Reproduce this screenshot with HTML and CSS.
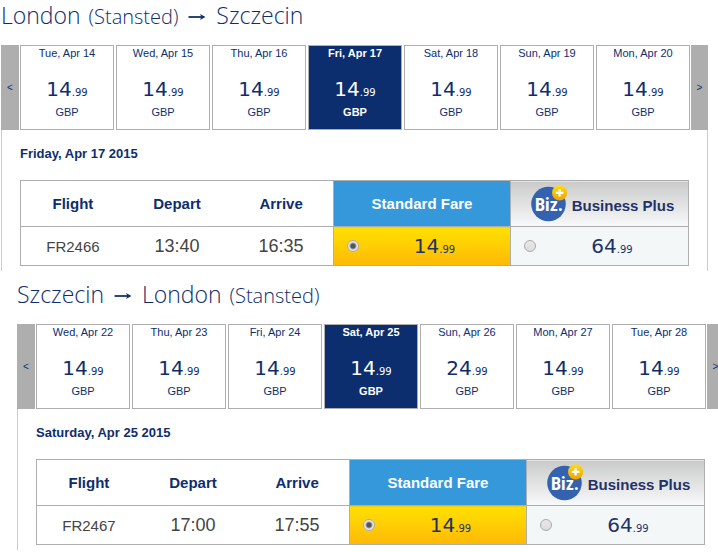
FILE: index.html
```html
<!DOCTYPE html>
<html lang="en">
<head>
    <meta charset="UTF-8">
    <meta name="viewport" content="width=device-width, initial-scale=1.0">
    <title>Select flights</title>
    <link rel="stylesheet" href="styles.css">
</head>
<body>
    <!-- shared icons -->
    <svg class="icon-defs" width="0" height="0" aria-hidden="true">
        <defs>
            <linearGradient id="gold" x1="0" y1="0" x2="0" y2="1">
                <stop offset="0" stop-color="#ffdc17"/>
                <stop offset="1" stop-color="#eda400"/>
            </linearGradient>
            <symbol id="arrow" viewBox="0 0 18 8">
                <path d="M0.5 4H16" stroke="#15316b" stroke-width="1.8" fill="none"/>
                <path d="M12 1L17.5 4L12 7L13.4 4Z" fill="#15316b"/>
            </symbol>
            <symbol id="biz" viewBox="0 0 37 37">
                <circle cx="17.5" cy="19" r="17.3" fill="#3562b0"/>
                <text x="4" y="26" class="biz-text">Biz.</text>
                <circle cx="28.6" cy="7.8" r="7.6" fill="url(#gold)"/>
                <path d="M28.6 4V11.6M24.8 7.8H32.4" stroke="#fff" stroke-width="2.2"/>
            </symbol>
        </defs>
    </svg>

    <section class="trip outbound">
        <h2>London <small>(Stansted)</small> <svg class="arrow" role="img" aria-label="to"><use href="#arrow"/></svg> Szczecin</h2>
        <div class="carousel">
            <button class="nav prev" type="button" aria-label="Earlier">&lt;</button>
            <div class="days">
                <button class="day" type="button"><span>Tue, Apr 14</span><span class="price">14<small>.99</small></span><span>GBP</span></button>
                <button class="day" type="button"><span>Wed, Apr 15</span><span class="price">14<small>.99</small></span><span>GBP</span></button>
                <button class="day" type="button"><span>Thu, Apr 16</span><span class="price">14<small>.99</small></span><span>GBP</span></button>
                <button class="day selected" type="button"><span>Fri, Apr 17</span><span class="price">14<small>.99</small></span><span>GBP</span></button>
                <button class="day" type="button"><span>Sat, Apr 18</span><span class="price">14<small>.99</small></span><span>GBP</span></button>
                <button class="day" type="button"><span>Sun, Apr 19</span><span class="price">14<small>.99</small></span><span>GBP</span></button>
                <button class="day" type="button"><span>Mon, Apr 20</span><span class="price">14<small>.99</small></span><span>GBP</span></button>
            </div>
            <button class="nav next" type="button" aria-label="Later">&gt;</button>
        </div>
        <div class="flights">
            <h3>Friday, Apr 17 2015</h3>
            <table>
                <colgroup><col><col><col><col class="col-standard"><col class="col-business"></colgroup>
                <thead>
                    <tr>
                        <th>Flight</th>
                        <th>Depart</th>
                        <th>Arrive</th>
                        <th class="standard">Standard Fare</th>
                        <th class="business"><div class="biz-head"><svg class="biz" aria-hidden="true"><use href="#biz"/></svg><span>Business Plus</span></div></th>
                    </tr>
                </thead>
                <tbody>
                    <tr>
                        <td class="number">FR2466</td>
                        <td>13:40</td>
                        <td>16:35</td>
                        <td class="standard"><label class="fare"><input type="radio" name="out" checked><span class="price">14<small>.99</small></span></label></td>
                        <td class="business"><label class="fare"><input type="radio" name="out"><span class="price">64<small>.99</small></span></label></td>
                    </tr>
                </tbody>
            </table>
        </div>
    </section>

    <section class="trip inbound">
        <h2>Szczecin <svg class="arrow" role="img" aria-label="to"><use href="#arrow"/></svg> London <small>(Stansted)</small></h2>
        <div class="carousel">
            <button class="nav prev" type="button" aria-label="Earlier">&lt;</button>
            <div class="days">
                <button class="day" type="button"><span>Wed, Apr 22</span><span class="price">14<small>.99</small></span><span>GBP</span></button>
                <button class="day" type="button"><span>Thu, Apr 23</span><span class="price">14<small>.99</small></span><span>GBP</span></button>
                <button class="day" type="button"><span>Fri, Apr 24</span><span class="price">14<small>.99</small></span><span>GBP</span></button>
                <button class="day selected" type="button"><span>Sat, Apr 25</span><span class="price">14<small>.99</small></span><span>GBP</span></button>
                <button class="day" type="button"><span>Sun, Apr 26</span><span class="price">24<small>.99</small></span><span>GBP</span></button>
                <button class="day" type="button"><span>Mon, Apr 27</span><span class="price">14<small>.99</small></span><span>GBP</span></button>
                <button class="day" type="button"><span>Tue, Apr 28</span><span class="price">14<small>.99</small></span><span>GBP</span></button>
            </div>
            <button class="nav next" type="button" aria-label="Later">&gt;</button>
        </div>
        <div class="flights">
            <h3>Saturday, Apr 25 2015</h3>
            <table>
                <colgroup><col><col><col><col class="col-standard"><col class="col-business"></colgroup>
                <thead>
                    <tr>
                        <th>Flight</th>
                        <th>Depart</th>
                        <th>Arrive</th>
                        <th class="standard">Standard Fare</th>
                        <th class="business"><div class="biz-head"><svg class="biz" aria-hidden="true"><use href="#biz"/></svg><span>Business Plus</span></div></th>
                    </tr>
                </thead>
                <tbody>
                    <tr>
                        <td class="number">FR2467</td>
                        <td>17:00</td>
                        <td>17:55</td>
                        <td class="standard"><label class="fare"><input type="radio" name="in" checked><span class="price">14<small>.99</small></span></label></td>
                        <td class="business"><label class="fare"><input type="radio" name="in"><span class="price">64<small>.99</small></span></label></td>
                    </tr>
                </tbody>
            </table>
        </div>
    </section>
</body>
</html>
```
FILE: styles.css
```css
* {
    box-sizing: border-box;
}
body {
    margin: 0;
    background: #fff;
    color: #0d2e6e;
    font-family: "Liberation Sans", Arial, sans-serif;
    font-size: 11px;
    overflow-x: hidden;
}
.icon-defs {
    position: absolute;
}
.trip {
    padding-bottom: 8px;
}
.outbound {
    margin: 0 10px 0 1px;
}
.inbound {
    margin: 0 -6px 0 17px;
    padding-bottom: 0;
}
h2 {
    margin: 0;
    height: 45px;
    font: 300 23px/30px "Open Sans", sans-serif;
    white-space: nowrap;
}
h2 small {
    margin-left: 2px;
    font-size: 20px;
}
.arrow {
    width: 18px;
    height: 8px;
    margin: 0 4px;
    vertical-align: 3px;
}

/* day picker */
.carousel {
    display: flex;
    height: 85px;
}
.nav {
    width: 18px;
    padding: 0;
    border: none;
    background: #aeaeae;
    color: #0d2e6e;
    font: 10px "Liberation Sans", Arial, sans-serif;
    cursor: pointer;
}
.next {
    width: 17px;
}
.days {
    flex: 1;
    display: flex;
    gap: 2px;
    padding: 0 1px;
}
.day {
    flex: 1;
    display: flex;
    flex-direction: column;
    align-items: center;
    padding: 0;
    border: 1px solid #aeaeae;
    background: #fff;
    color: #0d2e6e;
    font: 11px/14px "Liberation Sans", Arial, sans-serif;
    white-space: nowrap;
    cursor: pointer;
}
.day.selected {
    background: #0d2e6e;
    color: #fff;
    font-weight: bold;
}
.price {
    font: 20px/24px "DejaVu Sans", Verdana, sans-serif;
}
.price small {
    font-size: 10px;
}
.day .price {
    margin-top: 17px;
}

/* flight table */
.flights {
    padding: 16px 18px 5px;
    border: solid #ccc;
    border-width: 0 1px;
}
h3 {
    margin: 0 0 18px;
    font-size: 13px;
    line-height: 16px;
}
table {
    width: 100%;
    table-layout: fixed;
    border-collapse: collapse;
    border: 1px solid #aeaeae;
    color: #444;
    font-size: 18px;
}
.col-standard {
    width: 177px;
}
.col-business {
    width: 178px;
}
th, td {
    padding: 0;
    text-align: center;
}
th {
    height: 46px;
    border-bottom: 1px solid #aeaeae;
    color: #0d2e6e;
    font-size: 15px;
}
td {
    height: 39px;
}
.number {
    font-size: 15px;
}
.standard, .business {
    border-left: 1px solid #aeaeae;
}
th.standard {
    background: #3498db;
    color: #fff;
}
td.standard {
    background: linear-gradient(#ffe000, #ffb907);
}
th.business {
    background: linear-gradient(#cacaca, #f8f9fa);
    color: #223268;
}
td.business {
    background: #f3f7f8;
}
.biz-head {
    display: flex;
    justify-content: center;
    gap: 4px;
    padding: 4px 0 0 6px;
}
.biz-head span {
    line-height: 41px;
}
.biz {
    width: 37px;
    height: 37px;
}
.biz-text {
    fill: #fff;
    font: bold 18px "Liberation Sans Narrow", "Roboto Condensed", "Open Sans Condensed", Roboto, sans-serif;
}
.fare {
    display: flex;
    align-items: center;
    padding-left: 13px;
    color: #223268;
}
.fare .price {
    flex: 1;
    padding-top: 3px;
}
.fare input {
    width: 12px;
    height: 12px;
    margin: 0;
    appearance: none;
    border: 1px solid #aaa;
    border-radius: 50%;
    background: linear-gradient(#e8e8e8, #ddd);
}
.fare input:checked {
    background: radial-gradient(#555 0 2px, #e8e8e8 4px);
}
```
